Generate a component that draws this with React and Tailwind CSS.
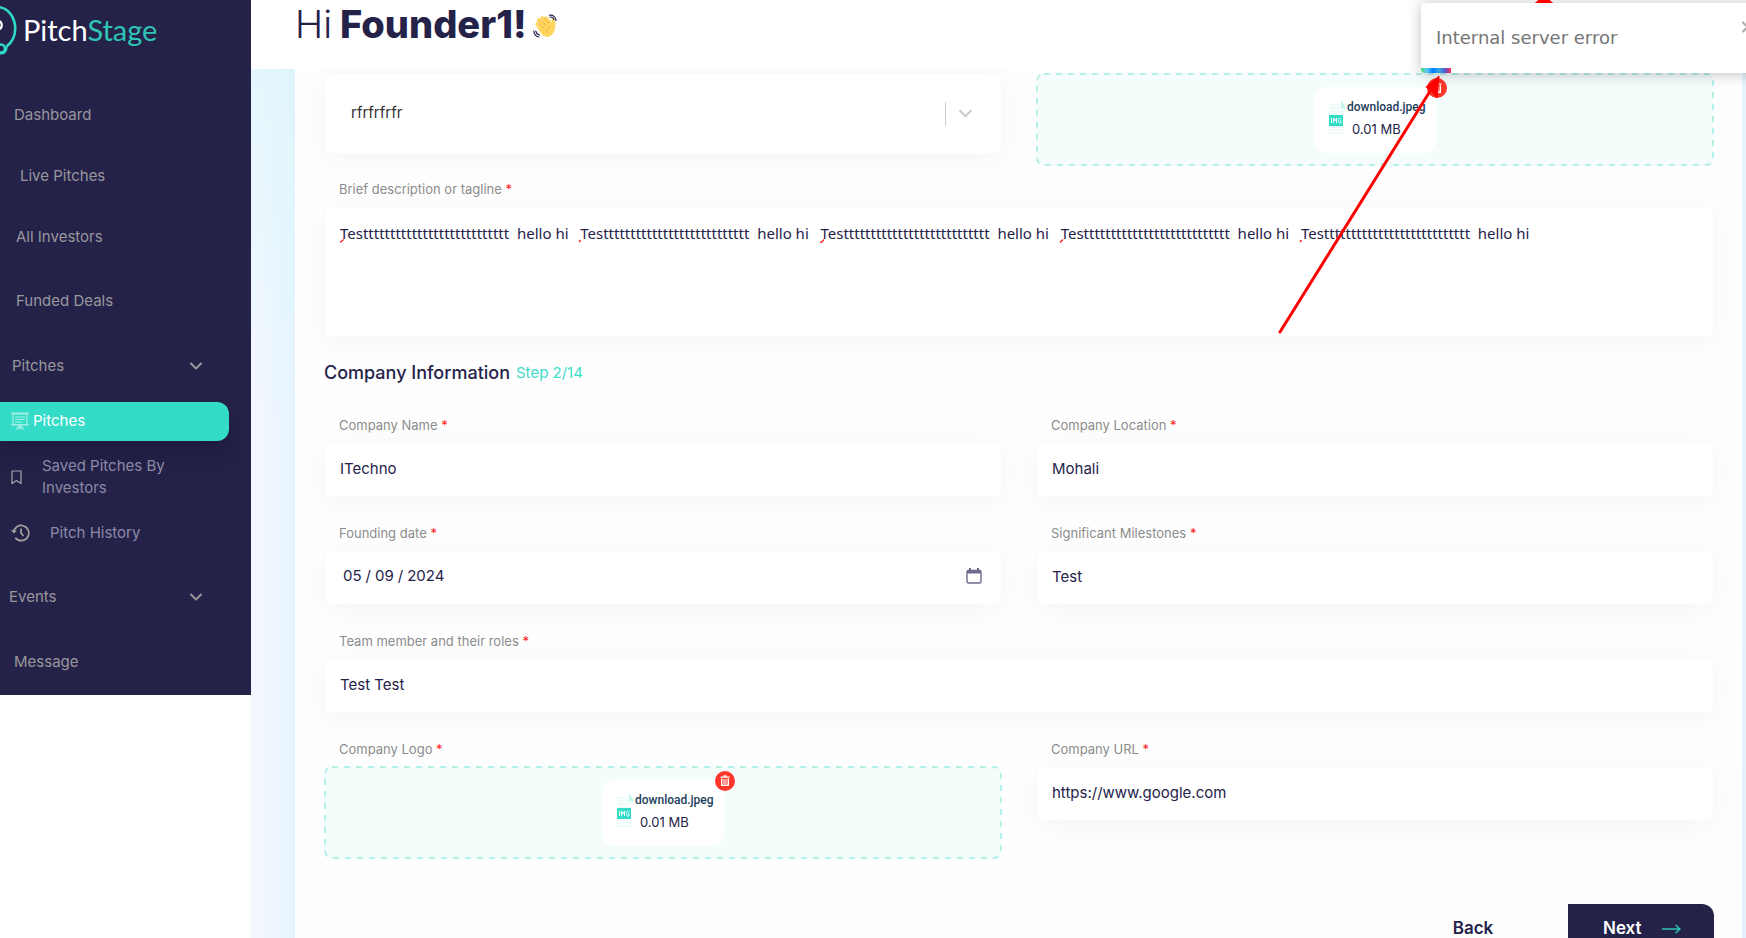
import React from "react";

const FONT = "font-['Inter','Liberation_Sans',sans-serif]";
const BOX = "rounded-lg border border-[#f9f9ff] bg-white shadow-[0_5px_30px_rgba(0,0,0,0.04)]";
const TAGLINE = Array(5).fill("Tes" + "t".repeat(27) + "  hello hi").join("   ");

function Logo() {
  return (
    <a href="#home" className="flex h-[85px] items-start">
      <svg width="17" height="56" viewBox="0 0 17 56" className="shrink-0" fill="none" stroke="#2fd9c6" strokeWidth="2.6">
        <path d="M-2 7C9 8 15.200 18 15.200 29C15.200 38 11 43 6.500 46.500" />
        <circle cx="1" cy="48.500" r="4" />
        <path d="M-2 53.500H2C5 53 7 50 6.500 46.500" strokeWidth="2" />
        <path d="M-2 21C3 21 3 29 -2 29.500" stroke="#fff" strokeWidth="2.200" />
      </svg>
      <span className="ml-1.5 mt-3 font-['Lato',sans-serif] text-[29px] leading-9 text-white">
        Pitch<span className="text-[#2ec4b6]">Stage</span>
      </span>
    </a>
  );
}

function Chevron({ className }) {
  return (
    <svg viewBox="0 0 14 10" className={className} fill="none" stroke="currentColor" strokeWidth="2" strokeLinecap="round" strokeLinejoin="round">
      <path d="M2 2.500L7 7.500L12 2.500" />
    </svg>
  );
}

function NavGroup({ className, label }) {
  return (
    <button type="button" className={className}>
      <span>{label}</span>
      <Chevron className="h-[10px] w-[14px]" />
    </button>
  );
}

function Sidebar() {
  return (
    <aside className="w-[251px] shrink-0 self-start bg-[#25224a] pb-3 text-[15px] text-[#99979c]">
      <Logo />
      <nav className="flex flex-col">
        <a href="#dashboard" className="flex h-[61px] items-center pl-3.5">Dashboard</a>
        <a href="#live" className="flex h-[61px] items-center pl-5">Live Pitches</a>
        <a href="#investors" className="flex h-[61px] items-center pl-4">All Investors</a>
        <a href="#funded" className="flex h-[66px] items-center pl-4">Funded Deals</a>
        <NavGroup className="flex h-16 items-center justify-between pl-3 pr-12" label="Pitches" />
        <a href="#pitches" className="mr-[22px] mt-1 flex h-[39px] items-center gap-1 rounded-r-xl bg-[#34dcc8] pb-px pl-[11px] text-white shadow-[0_15px_20px_rgba(23,20,48,0.5)]">
          <svg width="18" height="18" viewBox="0 0 17 18" fill="none" stroke="#a4f1e7">
            <path d="M0 1.500H17" strokeWidth="2" />
            <path d="M1.500 2V12M15.500 2V12M3.500 5H13.500M3.500 7.500H13.500M3.500 10H11" strokeWidth="1.200" />
            <path d="M0 12.800H17" strokeWidth="1.500" />
            <path d="M8.500 13L5 17.500M8.500 13L12 17.500M8.500 13V17.500M7 15H10" strokeWidth="1.300" />
          </svg>
          Pitches
        </a>
        <a href="#saved" className="flex h-[72px] items-center gap-5 pl-[11px] leading-[22px] text-[#8b89a5]">
          <svg width="11" height="15" viewBox="0 0 11 15" fill="none" stroke="#a5a3ab" strokeWidth="1.200" strokeLinejoin="round">
            <path d="M1 1H10V13.600L5.500 10.500L1 13.600Z" />
          </svg>
          <span className="w-[150px]">Saved Pitches By Investors</span>
        </a>
        <a href="#history" className="flex h-10 items-center gap-5 pl-[11px] text-[#8b89a5]">
          <svg width="19" height="18" viewBox="0 0 19 18" fill="none" stroke="#a3a09f" strokeWidth="1.700">
            <path d="M2.600 8.500A7.600 7.600 0 1 1 4.300 13.900" />
            <path d="M10 4.500V9L12.500 12" />
            <path d="M0 6L2.700 9.400L6 6.600Z" fill="#a3a09f" stroke="none" />
          </svg>
          Pitch History
        </a>
        <NavGroup className="flex h-[88px] items-center justify-between pl-[9px] pr-12" label="Events" />
        <a href="#message" className="flex h-[42px] items-center pl-3.5">Message</a>
      </nav>
    </aside>
  );
}

function WavingHand() {
  return (
    <svg width="24" height="24" viewBox="0 0 24 24" fill="none" strokeLinecap="round">
      <path d="M3.800 10L10 17M5.500 6L13 14M9 3.800L16 11.500M13 4L18 10" stroke="#ffd75e" strokeWidth="3.300" />
      <path d="M5 12L13 7L18 9.500L18.800 5C20 3.200 22 4.500 22 7C22.200 10 22.800 12 22 15C20.800 19.500 18 22.800 14 22.800C10 22.800 6.500 17.500 4 13Z" fill="#ffd75e" />
      <path d="M4.800 8L10.500 14M7.500 5.500L13 11.500M11.500 4.500L15.500 9" stroke="#f2a83c" strokeWidth="1" />
      <path d="M13.800 18.500C13 16 14.500 13.800 17 13.200" stroke="#f2a83c" strokeWidth="1" />
      <path d="M16.500 1.200C20 .8 22.800 3 23 6.500M17 3C19 3 20.500 4 21 5.500M.8 17C.8 20 3 22.800 6 23M2.800 17C3 19 4.500 20.500 6.500 21" stroke="#25224a" strokeWidth="1.200" />
    </svg>
  );
}

function Field({ id, label, wide, children }) {
  return (
    <div className={wide ? "col-span-2" : ""}>
      <label htmlFor={id} className="mb-[7px] block pl-[15px] text-[13px] leading-5 text-[#8c8c8c]">
        {label} <span className="text-[#ff1a1a]">*</span>
      </label>
      {children}
    </div>
  );
}

function TextField({ id, label, value, wide }) {
  return (
    <Field id={id} label={label} wide={wide}>
      <input id={id} type="text" defaultValue={value} className={"block h-[55px] w-full px-[15px] pb-0.5 text-[15px] text-[#25224a] outline-none " + BOX} />
    </Field>
  );
}

function Upload() {
  return (
    <div className="relative flex h-[93px] items-center justify-center rounded-lg bg-[#f4fdfc]">
      <svg className="absolute inset-0 h-full w-full overflow-visible" fill="none">
        <rect x="1" y="1" rx="7" className="h-[calc(100%-2px)] w-[calc(100%-2px)]" stroke="#b6f1e9" strokeWidth="2" strokeDasharray="6 6" />
      </svg>
      <div className="relative flex h-[66px] w-[122px] items-start rounded-xl bg-white pl-[15px] pt-3">
        <svg width="18" height="36" viewBox="0 0 18 36" className="shrink-0">
          <path d="M12 1L17 9.500H12Z" fill="#c0f3ec" />
          <path d="M0 6H11M0 9H15M0 12H15M0 15H15M0 28H15M0 31H15M0 34H15" stroke="#ddf8f4" strokeWidth="1" />
          <rect x="0" y="16" width="14" height="11" fill="#34dcc8" />
          <path d="M2.500 19V24M4.500 24V19L6 22L7.500 19V24M12 20.200C11 18.600 9.500 19 9.500 21.500C9.500 24.200 11 24.300 12 23.500V21.800H11" fill="none" stroke="#fff" strokeWidth=".9" />
        </svg>
        <div className="flex flex-col text-[#25224a]">
          <span className="font-['Roboto',sans-serif] text-[12px] font-medium leading-4 text-[#22405c]">download.jpeg</span>
          <span className="mt-1.5 pl-[5px] text-[13px] leading-4">0.01 MB</span>
        </div>
        <button type="button" aria-label="Remove file" className="absolute -right-[11px] -top-[9px] flex size-5 items-center justify-center rounded-full bg-[#ff372b]">
          <svg width="10" height="11" viewBox="0 0 10 11" fill="none" stroke="#fff">
            <path d="M.5 2.200H9.500M3.500 1H6.500" strokeWidth="1.300" />
            <path d="M1.700 3.500V10.300H8.300V3.500" strokeWidth="1.400" />
            <path d="M3.800 4V9M5 4V9M6.200 4V9" strokeWidth=".8" />
          </svg>
        </button>
      </div>
    </div>
  );
}

function PitchForm() {
  return (
    <form className="flex-1 bg-[#fefefe] pl-[29px] pr-7 pt-1">
      <div className="grid grid-cols-2 gap-x-[34px]">
        <div className={"relative h-[81px] " + BOX}>
          <select aria-label="Category" className="h-full w-full appearance-none rounded-lg bg-white pl-[26px] text-[15px] text-[#333] outline-none">
            <option>rfrfrfrfr</option>
          </select>
          <div className="pointer-events-none absolute inset-y-0 right-7 flex items-center gap-3 text-[#ccc]">
            <span className="h-6 w-px bg-[#ccc]" />
            <Chevron className="h-[11px] w-[15px]" />
          </div>
        </div>
        <Upload />
      </div>

      <div className="mt-[13px]">
        <Field id="tagline" label="Brief description or tagline">
          <div className="relative">
            <textarea
              id="tagline"
              spellCheck="false"
              defaultValue={TAGLINE}
              className={"block h-[131px] w-full resize-none px-[15px] pt-[15px] font-['Noto_Sans',sans-serif] text-[15px] leading-[22px] text-[#25224a] outline-none " + BOX}
            />
            <svg className="pointer-events-none absolute left-4 top-[33px] h-1 w-[981px]" fill="none" stroke="#ff1a1a" strokeWidth="1.300">
              <path d="M0 3.500L3.500 .5M239 3L240.500 1M480 3L481.500 3.500L484 .5M720 3.500L723 .5M960 3L961.500 1" />
            </svg>
          </div>
        </Field>
      </div>

      <div className="mt-5 flex items-center gap-1.5 leading-8">
        <h2 className="text-[18px] font-medium text-[#25224a]">Company Information</h2>
        <span className="text-[15px] text-[#3edcca]">Step 2/14</span>
      </div>

      <div className="mt-[26px] grid grid-cols-2 gap-x-[34px] gap-y-[26px]">
        <TextField id="name" label="Company Name" value="ITechno" />
        <TextField id="location" label="Company Location" value="Mohali" />
        <Field id="founded" label="Founding date">
          <div className="relative">
            <input
              id="founded"
              type="date"
              defaultValue="2024-05-09"
              className={"block h-[55px] w-full px-[17px] pb-0.5 text-[15px] text-[#25224a] outline-none [&::-webkit-calendar-picker-indicator]:opacity-0 [&::-webkit-datetime-edit-text]:px-[3px] " + BOX}
            />
            <svg width="16" height="16" viewBox="0 0 16 16" className="pointer-events-none absolute right-5 top-[18px]" fill="none">
              <rect x="1" y="2.500" width="14" height="12.500" rx="1.500" stroke="#6e6a8c" strokeWidth="1.400" />
              <path d="M1 3H15V5.500H1ZM3 0H5V3H3ZM11 0H13V3H11Z" fill="#6e6a8c" />
            </svg>
          </div>
        </Field>
        <TextField id="milestones" label="Significant Milestones" value="Test" />
        <TextField id="team" label="Team member and their roles" value="Test Test" wide />
        <Field label="Company Logo">
          <Upload />
        </Field>
        <TextField id="url" label="Company URL" value="https://www.google.com" />
      </div>

      <div className="mt-[45px] flex justify-end text-[17px] font-semibold">
        <button type="button" className="h-[54px] w-[190px] pb-1 text-[#25224a]">Back</button>
        <button type="button" className="flex h-[54px] w-[146px] items-center gap-5 rounded-r-xl bg-[#25224a] pb-1 pl-[35px] text-white">
          Next
          <svg width="19" height="10" viewBox="0 0 19 10" fill="none" stroke="#2ec4b6" strokeWidth="1.400">
            <path d="M0 5H18M13.500 1L18 5L13.500 9" />
          </svg>
        </button>
      </div>
    </form>
  );
}

export default function App() {
  return (
    <div className={"relative flex h-screen overflow-hidden bg-white " + FONT}>
      <Sidebar />
      <main className="flex min-w-0 flex-1 flex-col">
        <header className="relative z-10 flex h-[69px] shrink-0 items-start gap-1.5 bg-white pl-11 text-[#25224a]">
          <h1 className="flex items-baseline gap-2 text-[38px] font-light leading-[48px]">
            <span>Hi</span>
            <span className="font-extrabold">Founder1!</span>
          </h1>
          <span className="pt-3.5"><WavingHand /></span>
        </header>
        <div className="flex flex-1 bg-[linear-gradient(180deg,#e6f3fb,#e6f0fc)] pr-1">
          <div className="w-11 shrink-0 bg-[linear-gradient(180deg,rgba(222,246,250,0.7),rgba(240,245,255,0.2)_40%),linear-gradient(90deg,#f4f7ff_20%,#e2f4fd)]" />
          <PitchForm />
        </div>
      </main>

      <div className="absolute -right-[30px] top-[3px] z-20 h-[70px] w-[355px] rounded bg-white shadow-[0_1px_14px_rgba(0,0,0,0.25)]" role="alert">
        <p className="pl-[15px] pt-[23px] font-['DejaVu_Sans',sans-serif] text-[18px] leading-6 text-[#757575]">Internal server error</p>
        <button type="button" aria-label="Close" className="absolute right-[21px] top-[18px] text-[#aaa]">
          <svg width="14" height="12" viewBox="0 0 14 12" fill="none" stroke="currentColor" strokeWidth="2">
            <path d="M1.500 1L11.500 11M11.500 1L1.500 11" />
          </svg>
        </button>
        <div className="absolute bottom-0 left-0 h-[5px] w-[30px] rounded-bl bg-[linear-gradient(90deg,#4cd964,#5ac8fa,#007aff,#34aadc,#5856d6,#ff2d55)]" />
      </div>
      <svg className="pointer-events-none absolute right-0 top-0 z-30 h-[340px] w-[480px]" viewBox="0 0 480 340" fill="none">
        <path d="M269 3C272 0 275 -2 278 -2C281 -2 284 0 287 3Z" fill="#f00" />
        <path d="M14 332L166 88" stroke="#f00" strokeWidth="3" strokeLinecap="round" />
        <path d="M173 76L171 98L166 92L160 87Z" fill="#f00" stroke="#f00" />
      </svg>
    </div>
  );
}
